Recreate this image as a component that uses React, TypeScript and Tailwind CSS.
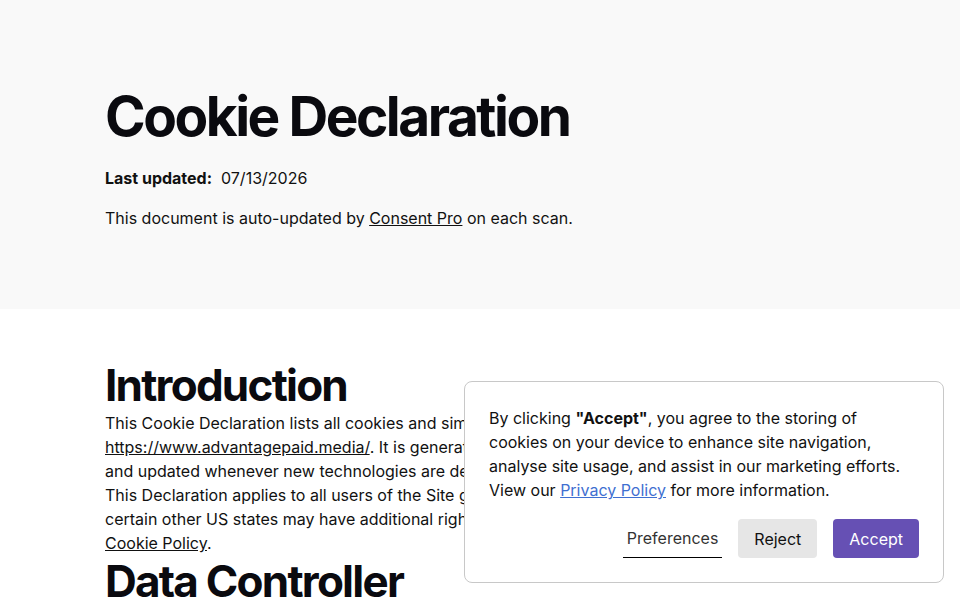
import React from 'react';

const CookieBanner: React.FC = () => {
  return (
    <div className="absolute left-[464px] top-[381px] w-[480px] rounded-lg border border-[#c8c8c8] bg-white px-6 pt-6 pb-6 text-[16px] leading-6 text-[#111]">
      <p>
        By clicking <strong className="font-bold">"Accept"</strong>, you agree to the storing of cookies on your device to enhance site navigation, analyse site usage, and assist in our marketing efforts. View our{' '}
        <a href="#" className="text-[#3f6fd1] underline">Privacy Policy</a> for more information.
      </p>
      <div className="mt-[17px] flex items-center justify-end gap-4">
        <button className="h-[39px] border-b border-black px-1 text-[16px] text-[#333]">Preferences</button>
        <button className="h-[39px] rounded bg-[#e6e6e6] px-4 text-[16px] text-[#111]">Reject</button>
        <button className="h-[39px] rounded bg-[#6650b4] px-4 text-[16px] text-white">Accept</button>
      </div>
    </div>
  );
};

const App: React.FC = () => {
  return (
    <div className="relative h-[600px] overflow-hidden bg-white text-[#111] font-['Inter',sans-serif]">
      <section className="h-[309px] bg-[#f9f9f9] pl-[105px] pt-[84px]">
        <h1 className="text-[55px] font-bold leading-[64px] tracking-[-0.045em] text-[#0a0a0f]">Cookie Declaration</h1>
        <p className="mt-[18px] text-[16px] leading-6">
          <strong className="font-bold">Last updated:</strong>&nbsp; 07/13/2026
        </p>
        <p className="mt-4 text-[16px] leading-6">
          This document is auto-updated by <a href="#" className="underline">Consent Pro</a> on each scan.
        </p>
      </section>
      <section className="pl-[105px] pr-[100px] pt-[50px]">
        <h2 className="text-[44px] font-bold leading-[52px] tracking-[-0.04em] text-[#0a0a0f]">Introduction</h2>
        <p className="text-[16px] leading-6">
          This Cookie Declaration lists all cookies and similar technologies used on
          <br />
          <a href="#" className="underline">https://www.advantagepaid.media/</a>. It is generated automatically by Consent Pro
          <br />
          and updated whenever new technologies are detected on the Site during a scan.
          <br />
          This Declaration applies to all users of the Site globally, though residents of California and
          <br />
          certain other US states may have additional rights as described in our
          <br />
          <a href="#" className="underline">Cookie Policy</a>.
        </p>
        <h2 className="text-[44px] font-bold leading-[52px] tracking-[-0.04em] text-[#0a0a0f]">Data Controller</h2>
      </section>
      <CookieBanner />
    </div>
  );
};

export default App;
